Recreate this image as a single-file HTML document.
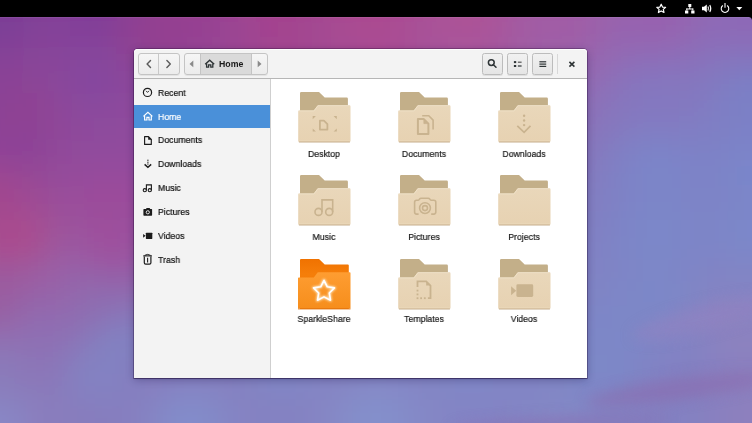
<!DOCTYPE html>
<html><head><meta charset="utf-8">
<style>
*{box-sizing:border-box;margin:0;padding:0}
html,body{width:752px;height:423px;overflow:hidden;background:#000;font-family:"Liberation Sans",sans-serif}
#bg{position:absolute;left:0;top:0;width:752px;height:423px}
#topbar{position:absolute;left:0;top:0;width:752px;height:17px;background:#000}
.tb{position:absolute;top:0}
#win{position:absolute;left:134px;top:49px;width:453px;height:329px;background:#fff;border-radius:4px 4px 0 0;box-shadow:0 0 0 1px rgba(30,0,40,.28),0 1px 1px rgba(20,10,60,.4),0 2px 8px rgba(20,10,60,.3)}
#hb{position:absolute;left:0;top:0;width:453px;height:30px;background:#f3f3f3;box-shadow:inset 0 1px 0 #fff;border-bottom:1px solid #b6b6b6;border-radius:4px 4px 0 0}
.btn{position:absolute;top:4px;height:22px;border:1px solid #c4c4c4;border-radius:3px;background:linear-gradient(#f6f6f6,#ececec);box-shadow:0 1px 0 rgba(0,0,0,.06)}
#side{position:absolute;left:0;top:30px;width:137px;height:299px;background:#f3f3f3;border-right:1px solid #cfcfcf}
.si{position:absolute;left:134px;width:136px;height:23px}
.si span{position:absolute;left:24px}
.st{position:absolute;left:158px;font-size:9.9px;line-height:10px;color:#111;white-space:nowrap;transform:scaleX(0.885);transform-origin:0 0;-webkit-text-stroke-width:0.22px}
.sel{background:#4a90d9;color:#fff}
.rb{background:linear-gradient(#f1f1f1,#e5e5e5);border-color:#bcbcbc;border-radius:2.5px;box-shadow:0 1px 0 rgba(0,0,0,.08)}
.st,.lbl,.ht{will-change:transform}
.lbl{position:absolute;font-size:9.9px;line-height:10px;color:#1a1a1a;text-align:center;width:80px;white-space:nowrap;transform:scaleX(0.885);-webkit-text-stroke-width:0.22px}
.fold{position:absolute;width:53px;height:52px}
</style></head><body>
<svg width="0" height="0" style="position:absolute"><defs><linearGradient id="fg" x1="0" y1="0" x2="0" y2="1"><stop offset="0" stop-color="#e9d7ba"/><stop offset="1" stop-color="#e7d2b2"/></linearGradient></defs></svg>
<svg id="bg" width="752" height="423" viewBox="0 0 752 423">
<defs><filter id="bb" x="0" y="0" width="752" height="423" filterUnits="userSpaceOnUse"><feGaussianBlur stdDeviation="14"/></filter></defs>
<g filter="url(#bb)"><rect x="-47.5" y="-47.5" width="24.5" height="24.5" fill="#7a3d96"/><rect x="-24.0" y="-47.5" width="24.5" height="24.5" fill="#7a3d96"/><rect x="-0.5" y="-47.5" width="24.5" height="24.5" fill="#7b3d96"/><rect x="23.0" y="-47.5" width="24.5" height="24.5" fill="#814197"/><rect x="46.5" y="-47.5" width="24.5" height="24.5" fill="#844198"/><rect x="70.0" y="-47.5" width="24.5" height="24.5" fill="#813e98"/><rect x="93.5" y="-47.5" width="24.5" height="24.5" fill="#813e98"/><rect x="117.0" y="-47.5" width="24.5" height="24.5" fill="#8d4194"/><rect x="140.5" y="-47.5" width="24.5" height="24.5" fill="#924191"/><rect x="164.0" y="-47.5" width="24.5" height="24.5" fill="#963f91"/><rect x="187.5" y="-47.5" width="24.5" height="24.5" fill="#963f91"/><rect x="211.0" y="-47.5" width="24.5" height="24.5" fill="#984393"/><rect x="234.5" y="-47.5" width="24.5" height="24.5" fill="#9f4491"/><rect x="258.0" y="-47.5" width="24.5" height="24.5" fill="#a4428e"/><rect x="281.5" y="-47.5" width="24.5" height="24.5" fill="#a4428e"/><rect x="305.0" y="-47.5" width="24.5" height="24.5" fill="#a34791"/><rect x="328.5" y="-47.5" width="24.5" height="24.5" fill="#a74b92"/><rect x="352.0" y="-47.5" width="24.5" height="24.5" fill="#ac4a90"/><rect x="375.5" y="-47.5" width="24.5" height="24.5" fill="#ac4a90"/><rect x="399.0" y="-47.5" width="24.5" height="24.5" fill="#a94e95"/><rect x="422.5" y="-47.5" width="24.5" height="24.5" fill="#a95298"/><rect x="446.0" y="-47.5" width="24.5" height="24.5" fill="#ad5296"/><rect x="469.5" y="-47.5" width="24.5" height="24.5" fill="#ad5296"/><rect x="493.0" y="-47.5" width="24.5" height="24.5" fill="#a7579c"/><rect x="516.5" y="-47.5" width="24.5" height="24.5" fill="#a15ca4"/><rect x="540.0" y="-47.5" width="24.5" height="24.5" fill="#a25ca5"/><rect x="563.5" y="-47.5" width="24.5" height="24.5" fill="#a25ca5"/><rect x="587.0" y="-47.5" width="24.5" height="24.5" fill="#9c60aa"/><rect x="610.5" y="-47.5" width="24.5" height="24.5" fill="#9763ae"/><rect x="634.0" y="-47.5" width="24.5" height="24.5" fill="#9860ae"/><rect x="657.5" y="-47.5" width="24.5" height="24.5" fill="#9861ae"/><rect x="681.0" y="-47.5" width="24.5" height="24.5" fill="#9366b2"/><rect x="704.5" y="-47.5" width="24.5" height="24.5" fill="#8e6ab6"/><rect x="728.0" y="-47.5" width="24.5" height="24.5" fill="#8e68b6"/><rect x="751.5" y="-47.5" width="24.5" height="24.5" fill="#8e68b6"/><rect x="775.0" y="-47.5" width="24.5" height="24.5" fill="#8e68b6"/><rect x="-47.5" y="-24.0" width="24.5" height="24.5" fill="#7a3d96"/><rect x="-24.0" y="-24.0" width="24.5" height="24.5" fill="#7a3d96"/><rect x="-0.5" y="-24.0" width="24.5" height="24.5" fill="#7b3d96"/><rect x="23.0" y="-24.0" width="24.5" height="24.5" fill="#814197"/><rect x="46.5" y="-24.0" width="24.5" height="24.5" fill="#844198"/><rect x="70.0" y="-24.0" width="24.5" height="24.5" fill="#813e98"/><rect x="93.5" y="-24.0" width="24.5" height="24.5" fill="#813e98"/><rect x="117.0" y="-24.0" width="24.5" height="24.5" fill="#8d4194"/><rect x="140.5" y="-24.0" width="24.5" height="24.5" fill="#924191"/><rect x="164.0" y="-24.0" width="24.5" height="24.5" fill="#963f91"/><rect x="187.5" y="-24.0" width="24.5" height="24.5" fill="#963f91"/><rect x="211.0" y="-24.0" width="24.5" height="24.5" fill="#984393"/><rect x="234.5" y="-24.0" width="24.5" height="24.5" fill="#9f4491"/><rect x="258.0" y="-24.0" width="24.5" height="24.5" fill="#a4428e"/><rect x="281.5" y="-24.0" width="24.5" height="24.5" fill="#a4428e"/><rect x="305.0" y="-24.0" width="24.5" height="24.5" fill="#a34791"/><rect x="328.5" y="-24.0" width="24.5" height="24.5" fill="#a74b92"/><rect x="352.0" y="-24.0" width="24.5" height="24.5" fill="#ac4a90"/><rect x="375.5" y="-24.0" width="24.5" height="24.5" fill="#ac4a90"/><rect x="399.0" y="-24.0" width="24.5" height="24.5" fill="#a94e95"/><rect x="422.5" y="-24.0" width="24.5" height="24.5" fill="#a95298"/><rect x="446.0" y="-24.0" width="24.5" height="24.5" fill="#ad5296"/><rect x="469.5" y="-24.0" width="24.5" height="24.5" fill="#ad5296"/><rect x="493.0" y="-24.0" width="24.5" height="24.5" fill="#a7579c"/><rect x="516.5" y="-24.0" width="24.5" height="24.5" fill="#a15ca4"/><rect x="540.0" y="-24.0" width="24.5" height="24.5" fill="#a25ca5"/><rect x="563.5" y="-24.0" width="24.5" height="24.5" fill="#a25ca5"/><rect x="587.0" y="-24.0" width="24.5" height="24.5" fill="#9c60aa"/><rect x="610.5" y="-24.0" width="24.5" height="24.5" fill="#9763ae"/><rect x="634.0" y="-24.0" width="24.5" height="24.5" fill="#9860ae"/><rect x="657.5" y="-24.0" width="24.5" height="24.5" fill="#9861ae"/><rect x="681.0" y="-24.0" width="24.5" height="24.5" fill="#9366b2"/><rect x="704.5" y="-24.0" width="24.5" height="24.5" fill="#8e6ab6"/><rect x="728.0" y="-24.0" width="24.5" height="24.5" fill="#8e68b6"/><rect x="751.5" y="-24.0" width="24.5" height="24.5" fill="#8e68b6"/><rect x="775.0" y="-24.0" width="24.5" height="24.5" fill="#8e68b6"/><rect x="-47.5" y="-0.5" width="24.5" height="24.5" fill="#7a3d96"/><rect x="-24.0" y="-0.5" width="24.5" height="24.5" fill="#7a3d96"/><rect x="-0.5" y="-0.5" width="24.5" height="24.5" fill="#7b3d96"/><rect x="23.0" y="-0.5" width="24.5" height="24.5" fill="#814197"/><rect x="46.5" y="-0.5" width="24.5" height="24.5" fill="#844198"/><rect x="70.0" y="-0.5" width="24.5" height="24.5" fill="#813e98"/><rect x="93.5" y="-0.5" width="24.5" height="24.5" fill="#813e98"/><rect x="117.0" y="-0.5" width="24.5" height="24.5" fill="#8d4194"/><rect x="140.5" y="-0.5" width="24.5" height="24.5" fill="#924191"/><rect x="164.0" y="-0.5" width="24.5" height="24.5" fill="#963f91"/><rect x="187.5" y="-0.5" width="24.5" height="24.5" fill="#963f91"/><rect x="211.0" y="-0.5" width="24.5" height="24.5" fill="#984393"/><rect x="234.5" y="-0.5" width="24.5" height="24.5" fill="#9f4491"/><rect x="258.0" y="-0.5" width="24.5" height="24.5" fill="#a4428e"/><rect x="281.5" y="-0.5" width="24.5" height="24.5" fill="#a4428e"/><rect x="305.0" y="-0.5" width="24.5" height="24.5" fill="#a34791"/><rect x="328.5" y="-0.5" width="24.5" height="24.5" fill="#a74b92"/><rect x="352.0" y="-0.5" width="24.5" height="24.5" fill="#ac4a90"/><rect x="375.5" y="-0.5" width="24.5" height="24.5" fill="#ac4a90"/><rect x="399.0" y="-0.5" width="24.5" height="24.5" fill="#a94e95"/><rect x="422.5" y="-0.5" width="24.5" height="24.5" fill="#a95298"/><rect x="446.0" y="-0.5" width="24.5" height="24.5" fill="#ad5296"/><rect x="469.5" y="-0.5" width="24.5" height="24.5" fill="#ad5296"/><rect x="493.0" y="-0.5" width="24.5" height="24.5" fill="#a7579c"/><rect x="516.5" y="-0.5" width="24.5" height="24.5" fill="#a15ca4"/><rect x="540.0" y="-0.5" width="24.5" height="24.5" fill="#a25ca5"/><rect x="563.5" y="-0.5" width="24.5" height="24.5" fill="#a25ca5"/><rect x="587.0" y="-0.5" width="24.5" height="24.5" fill="#9c60aa"/><rect x="610.5" y="-0.5" width="24.5" height="24.5" fill="#9763ae"/><rect x="634.0" y="-0.5" width="24.5" height="24.5" fill="#9860ae"/><rect x="657.5" y="-0.5" width="24.5" height="24.5" fill="#9861ae"/><rect x="681.0" y="-0.5" width="24.5" height="24.5" fill="#9366b2"/><rect x="704.5" y="-0.5" width="24.5" height="24.5" fill="#8e6ab6"/><rect x="728.0" y="-0.5" width="24.5" height="24.5" fill="#8e68b6"/><rect x="751.5" y="-0.5" width="24.5" height="24.5" fill="#8e68b6"/><rect x="775.0" y="-0.5" width="24.5" height="24.5" fill="#8e68b6"/><rect x="-47.5" y="23.0" width="24.5" height="24.5" fill="#7c3e96"/><rect x="-24.0" y="23.0" width="24.5" height="24.5" fill="#7c3e96"/><rect x="-0.5" y="23.0" width="24.5" height="24.5" fill="#7e3f97"/><rect x="23.0" y="23.0" width="24.5" height="24.5" fill="#844298"/><rect x="46.5" y="23.0" width="24.5" height="24.5" fill="#854399"/><rect x="70.0" y="23.0" width="24.5" height="24.5" fill="#834099"/><rect x="93.5" y="23.0" width="24.5" height="24.5" fill="#844098"/><rect x="117.0" y="23.0" width="24.5" height="24.5" fill="#8f4192"/><rect x="140.5" y="23.0" width="24.5" height="24.5" fill="#92408f"/><rect x="164.0" y="23.0" width="24.5" height="24.5" fill="#944091"/><rect x="187.5" y="23.0" width="24.5" height="24.5" fill="#964192"/><rect x="211.0" y="23.0" width="24.5" height="24.5" fill="#984493"/><rect x="234.5" y="23.0" width="24.5" height="24.5" fill="#9e4592"/><rect x="258.0" y="23.0" width="24.5" height="24.5" fill="#a3438f"/><rect x="281.5" y="23.0" width="24.5" height="24.5" fill="#a3448f"/><rect x="305.0" y="23.0" width="24.5" height="24.5" fill="#a34892"/><rect x="328.5" y="23.0" width="24.5" height="24.5" fill="#a74b93"/><rect x="352.0" y="23.0" width="24.5" height="24.5" fill="#aa4b91"/><rect x="375.5" y="23.0" width="24.5" height="24.5" fill="#aa4b92"/><rect x="399.0" y="23.0" width="24.5" height="24.5" fill="#a84f96"/><rect x="422.5" y="23.0" width="24.5" height="24.5" fill="#a85399"/><rect x="446.0" y="23.0" width="24.5" height="24.5" fill="#ab5398"/><rect x="469.5" y="23.0" width="24.5" height="24.5" fill="#ab5398"/><rect x="493.0" y="23.0" width="24.5" height="24.5" fill="#a6589e"/><rect x="516.5" y="23.0" width="24.5" height="24.5" fill="#a15ca4"/><rect x="540.0" y="23.0" width="24.5" height="24.5" fill="#a15da6"/><rect x="563.5" y="23.0" width="24.5" height="24.5" fill="#a05da6"/><rect x="587.0" y="23.0" width="24.5" height="24.5" fill="#9a62ab"/><rect x="610.5" y="23.0" width="24.5" height="24.5" fill="#9565b0"/><rect x="634.0" y="23.0" width="24.5" height="24.5" fill="#9663b0"/><rect x="657.5" y="23.0" width="24.5" height="24.5" fill="#9663b0"/><rect x="681.0" y="23.0" width="24.5" height="24.5" fill="#9069b4"/><rect x="704.5" y="23.0" width="24.5" height="24.5" fill="#8c6cb8"/><rect x="728.0" y="23.0" width="24.5" height="24.5" fill="#8d6ab7"/><rect x="751.5" y="23.0" width="24.5" height="24.5" fill="#8d69b7"/><rect x="775.0" y="23.0" width="24.5" height="24.5" fill="#8d69b7"/><rect x="-47.5" y="46.5" width="24.5" height="24.5" fill="#874297"/><rect x="-24.0" y="46.5" width="24.5" height="24.5" fill="#874297"/><rect x="-0.5" y="46.5" width="24.5" height="24.5" fill="#874297"/><rect x="23.0" y="46.5" width="24.5" height="24.5" fill="#894498"/><rect x="46.5" y="46.5" width="24.5" height="24.5" fill="#88459a"/><rect x="70.0" y="46.5" width="24.5" height="24.5" fill="#86469d"/><rect x="93.5" y="46.5" width="24.5" height="24.5" fill="#87469c"/><rect x="117.0" y="46.5" width="24.5" height="24.5" fill="#8d4496"/><rect x="140.5" y="46.5" width="24.5" height="24.5" fill="#914292"/><rect x="164.0" y="46.5" width="24.5" height="24.5" fill="#934393"/><rect x="187.5" y="46.5" width="24.5" height="24.5" fill="#954494"/><rect x="211.0" y="46.5" width="24.5" height="24.5" fill="#994694"/><rect x="234.5" y="46.5" width="24.5" height="24.5" fill="#9e4793"/><rect x="258.0" y="46.5" width="24.5" height="24.5" fill="#a24792"/><rect x="281.5" y="46.5" width="24.5" height="24.5" fill="#a34792"/><rect x="305.0" y="46.5" width="24.5" height="24.5" fill="#a34a93"/><rect x="328.5" y="46.5" width="24.5" height="24.5" fill="#a54c94"/><rect x="352.0" y="46.5" width="24.5" height="24.5" fill="#a84d94"/><rect x="375.5" y="46.5" width="24.5" height="24.5" fill="#a84e94"/><rect x="399.0" y="46.5" width="24.5" height="24.5" fill="#a75198"/><rect x="422.5" y="46.5" width="24.5" height="24.5" fill="#a6549b"/><rect x="446.0" y="46.5" width="24.5" height="24.5" fill="#a7569d"/><rect x="469.5" y="46.5" width="24.5" height="24.5" fill="#a6579e"/><rect x="493.0" y="46.5" width="24.5" height="24.5" fill="#a35aa1"/><rect x="516.5" y="46.5" width="24.5" height="24.5" fill="#9f5ea5"/><rect x="540.0" y="46.5" width="24.5" height="24.5" fill="#9d60a8"/><rect x="563.5" y="46.5" width="24.5" height="24.5" fill="#9a62ab"/><rect x="587.0" y="46.5" width="24.5" height="24.5" fill="#9567b0"/><rect x="610.5" y="46.5" width="24.5" height="24.5" fill="#906cb5"/><rect x="634.0" y="46.5" width="24.5" height="24.5" fill="#8d6db7"/><rect x="657.5" y="46.5" width="24.5" height="24.5" fill="#8c6eb8"/><rect x="681.0" y="46.5" width="24.5" height="24.5" fill="#8a70ba"/><rect x="704.5" y="46.5" width="24.5" height="24.5" fill="#8773bc"/><rect x="728.0" y="46.5" width="24.5" height="24.5" fill="#8574bd"/><rect x="751.5" y="46.5" width="24.5" height="24.5" fill="#8574be"/><rect x="775.0" y="46.5" width="24.5" height="24.5" fill="#8574be"/><rect x="-47.5" y="70.0" width="24.5" height="24.5" fill="#8b4296"/><rect x="-24.0" y="70.0" width="24.5" height="24.5" fill="#8b4296"/><rect x="-0.5" y="70.0" width="24.5" height="24.5" fill="#8b4296"/><rect x="23.0" y="70.0" width="24.5" height="24.5" fill="#8c4497"/><rect x="46.5" y="70.0" width="24.5" height="24.5" fill="#8a469b"/><rect x="70.0" y="70.0" width="24.5" height="24.5" fill="#85479f"/><rect x="93.5" y="70.0" width="24.5" height="24.5" fill="#85479f"/><rect x="117.0" y="70.0" width="24.5" height="24.5" fill="#8b479b"/><rect x="140.5" y="70.0" width="24.5" height="24.5" fill="#8f4798"/><rect x="164.0" y="70.0" width="24.5" height="24.5" fill="#924797"/><rect x="187.5" y="70.0" width="24.5" height="24.5" fill="#954897"/><rect x="211.0" y="70.0" width="24.5" height="24.5" fill="#9a4996"/><rect x="234.5" y="70.0" width="24.5" height="24.5" fill="#a14893"/><rect x="258.0" y="70.0" width="24.5" height="24.5" fill="#a64590"/><rect x="281.5" y="70.0" width="24.5" height="24.5" fill="#a64690"/><rect x="305.0" y="70.0" width="24.5" height="24.5" fill="#a44993"/><rect x="328.5" y="70.0" width="24.5" height="24.5" fill="#a64c94"/><rect x="352.0" y="70.0" width="24.5" height="24.5" fill="#aa4b92"/><rect x="375.5" y="70.0" width="24.5" height="24.5" fill="#aa4c92"/><rect x="399.0" y="70.0" width="24.5" height="24.5" fill="#a75097"/><rect x="422.5" y="70.0" width="24.5" height="24.5" fill="#a5559d"/><rect x="446.0" y="70.0" width="24.5" height="24.5" fill="#a756a0"/><rect x="469.5" y="70.0" width="24.5" height="24.5" fill="#a757a0"/><rect x="493.0" y="70.0" width="24.5" height="24.5" fill="#a35aa3"/><rect x="516.5" y="70.0" width="24.5" height="24.5" fill="#9d5fa7"/><rect x="540.0" y="70.0" width="24.5" height="24.5" fill="#9964ac"/><rect x="563.5" y="70.0" width="24.5" height="24.5" fill="#9468b0"/><rect x="587.0" y="70.0" width="24.5" height="24.5" fill="#8f6db5"/><rect x="610.5" y="70.0" width="24.5" height="24.5" fill="#8973bb"/><rect x="634.0" y="70.0" width="24.5" height="24.5" fill="#8576bf"/><rect x="657.5" y="70.0" width="24.5" height="24.5" fill="#8577bf"/><rect x="681.0" y="70.0" width="24.5" height="24.5" fill="#8576be"/><rect x="704.5" y="70.0" width="24.5" height="24.5" fill="#817ac1"/><rect x="728.0" y="70.0" width="24.5" height="24.5" fill="#7c7ec4"/><rect x="751.5" y="70.0" width="24.5" height="24.5" fill="#7b7fc5"/><rect x="775.0" y="70.0" width="24.5" height="24.5" fill="#7b7fc5"/><rect x="-47.5" y="93.5" width="24.5" height="24.5" fill="#8a4196"/><rect x="-24.0" y="93.5" width="24.5" height="24.5" fill="#8a4196"/><rect x="-0.5" y="93.5" width="24.5" height="24.5" fill="#8d4294"/><rect x="23.0" y="93.5" width="24.5" height="24.5" fill="#904393"/><rect x="46.5" y="93.5" width="24.5" height="24.5" fill="#8d4699"/><rect x="70.0" y="93.5" width="24.5" height="24.5" fill="#8a489d"/><rect x="93.5" y="93.5" width="24.5" height="24.5" fill="#8a499e"/><rect x="117.0" y="93.5" width="24.5" height="24.5" fill="#8d4a9c"/><rect x="140.5" y="93.5" width="24.5" height="24.5" fill="#904a9b"/><rect x="164.0" y="93.5" width="24.5" height="24.5" fill="#924b9a"/><rect x="187.5" y="93.5" width="24.5" height="24.5" fill="#954b99"/><rect x="211.0" y="93.5" width="24.5" height="24.5" fill="#9a4b97"/><rect x="234.5" y="93.5" width="24.5" height="24.5" fill="#a14893"/><rect x="258.0" y="93.5" width="24.5" height="24.5" fill="#a7458f"/><rect x="281.5" y="93.5" width="24.5" height="24.5" fill="#a7458f"/><rect x="305.0" y="93.5" width="24.5" height="24.5" fill="#a54a93"/><rect x="328.5" y="93.5" width="24.5" height="24.5" fill="#a74d94"/><rect x="352.0" y="93.5" width="24.5" height="24.5" fill="#ab4a91"/><rect x="375.5" y="93.5" width="24.5" height="24.5" fill="#ab4b91"/><rect x="399.0" y="93.5" width="24.5" height="24.5" fill="#a75097"/><rect x="422.5" y="93.5" width="24.5" height="24.5" fill="#a5569f"/><rect x="446.0" y="93.5" width="24.5" height="24.5" fill="#a756a0"/><rect x="469.5" y="93.5" width="24.5" height="24.5" fill="#a756a0"/><rect x="493.0" y="93.5" width="24.5" height="24.5" fill="#a25ba3"/><rect x="516.5" y="93.5" width="24.5" height="24.5" fill="#9b61a9"/><rect x="540.0" y="93.5" width="24.5" height="24.5" fill="#9568af"/><rect x="563.5" y="93.5" width="24.5" height="24.5" fill="#906db4"/><rect x="587.0" y="93.5" width="24.5" height="24.5" fill="#8b72b9"/><rect x="610.5" y="93.5" width="24.5" height="24.5" fill="#8676be"/><rect x="634.0" y="93.5" width="24.5" height="24.5" fill="#8478c0"/><rect x="657.5" y="93.5" width="24.5" height="24.5" fill="#8478c0"/><rect x="681.0" y="93.5" width="24.5" height="24.5" fill="#8379c0"/><rect x="704.5" y="93.5" width="24.5" height="24.5" fill="#7f7dc3"/><rect x="728.0" y="93.5" width="24.5" height="24.5" fill="#7b80c6"/><rect x="751.5" y="93.5" width="24.5" height="24.5" fill="#7a80c6"/><rect x="775.0" y="93.5" width="24.5" height="24.5" fill="#7a80c6"/><rect x="-47.5" y="117.0" width="24.5" height="24.5" fill="#8e4295"/><rect x="-24.0" y="117.0" width="24.5" height="24.5" fill="#8e4295"/><rect x="-0.5" y="117.0" width="24.5" height="24.5" fill="#8f4294"/><rect x="23.0" y="117.0" width="24.5" height="24.5" fill="#8e4295"/><rect x="46.5" y="117.0" width="24.5" height="24.5" fill="#8f4698"/><rect x="70.0" y="117.0" width="24.5" height="24.5" fill="#8e4a9c"/><rect x="93.5" y="117.0" width="24.5" height="24.5" fill="#8e4c9e"/><rect x="117.0" y="117.0" width="24.5" height="24.5" fill="#8f4c9d"/><rect x="140.5" y="117.0" width="24.5" height="24.5" fill="#904c9d"/><rect x="164.0" y="117.0" width="24.5" height="24.5" fill="#934d9c"/><rect x="187.5" y="117.0" width="24.5" height="24.5" fill="#954e9c"/><rect x="211.0" y="117.0" width="24.5" height="24.5" fill="#994e9a"/><rect x="234.5" y="117.0" width="24.5" height="24.5" fill="#9e4c97"/><rect x="258.0" y="117.0" width="24.5" height="24.5" fill="#a34993"/><rect x="281.5" y="117.0" width="24.5" height="24.5" fill="#a44993"/><rect x="305.0" y="117.0" width="24.5" height="24.5" fill="#a24d96"/><rect x="328.5" y="117.0" width="24.5" height="24.5" fill="#a44f97"/><rect x="352.0" y="117.0" width="24.5" height="24.5" fill="#a74e95"/><rect x="375.5" y="117.0" width="24.5" height="24.5" fill="#a74f95"/><rect x="399.0" y="117.0" width="24.5" height="24.5" fill="#a3549b"/><rect x="422.5" y="117.0" width="24.5" height="24.5" fill="#a258a1"/><rect x="446.0" y="117.0" width="24.5" height="24.5" fill="#a459a2"/><rect x="469.5" y="117.0" width="24.5" height="24.5" fill="#a35aa3"/><rect x="493.0" y="117.0" width="24.5" height="24.5" fill="#9e5fa7"/><rect x="516.5" y="117.0" width="24.5" height="24.5" fill="#9765ad"/><rect x="540.0" y="117.0" width="24.5" height="24.5" fill="#916bb2"/><rect x="563.5" y="117.0" width="24.5" height="24.5" fill="#8c71b7"/><rect x="587.0" y="117.0" width="24.5" height="24.5" fill="#8776bc"/><rect x="610.5" y="117.0" width="24.5" height="24.5" fill="#847ac0"/><rect x="634.0" y="117.0" width="24.5" height="24.5" fill="#827bc2"/><rect x="657.5" y="117.0" width="24.5" height="24.5" fill="#827cc2"/><rect x="681.0" y="117.0" width="24.5" height="24.5" fill="#817dc3"/><rect x="704.5" y="117.0" width="24.5" height="24.5" fill="#7f7fc4"/><rect x="728.0" y="117.0" width="24.5" height="24.5" fill="#7c80c6"/><rect x="751.5" y="117.0" width="24.5" height="24.5" fill="#7c80c6"/><rect x="775.0" y="117.0" width="24.5" height="24.5" fill="#7c80c6"/><rect x="-47.5" y="140.5" width="24.5" height="24.5" fill="#8f4397"/><rect x="-24.0" y="140.5" width="24.5" height="24.5" fill="#8f4397"/><rect x="-0.5" y="140.5" width="24.5" height="24.5" fill="#8b4298"/><rect x="23.0" y="140.5" width="24.5" height="24.5" fill="#8d4398"/><rect x="46.5" y="140.5" width="24.5" height="24.5" fill="#904899"/><rect x="70.0" y="140.5" width="24.5" height="24.5" fill="#914b9c"/><rect x="93.5" y="140.5" width="24.5" height="24.5" fill="#8f4c9e"/><rect x="117.0" y="140.5" width="24.5" height="24.5" fill="#904c9e"/><rect x="140.5" y="140.5" width="24.5" height="24.5" fill="#924e9d"/><rect x="164.0" y="140.5" width="24.5" height="24.5" fill="#93509e"/><rect x="187.5" y="140.5" width="24.5" height="24.5" fill="#95529e"/><rect x="211.0" y="140.5" width="24.5" height="24.5" fill="#97539e"/><rect x="234.5" y="140.5" width="24.5" height="24.5" fill="#9a539c"/><rect x="258.0" y="140.5" width="24.5" height="24.5" fill="#9c529b"/><rect x="281.5" y="140.5" width="24.5" height="24.5" fill="#9d529b"/><rect x="305.0" y="140.5" width="24.5" height="24.5" fill="#9d549c"/><rect x="328.5" y="140.5" width="24.5" height="24.5" fill="#9e559c"/><rect x="352.0" y="140.5" width="24.5" height="24.5" fill="#a0559c"/><rect x="375.5" y="140.5" width="24.5" height="24.5" fill="#a0579d"/><rect x="399.0" y="140.5" width="24.5" height="24.5" fill="#9d5aa1"/><rect x="422.5" y="140.5" width="24.5" height="24.5" fill="#9c5ea5"/><rect x="446.0" y="140.5" width="24.5" height="24.5" fill="#9b60a8"/><rect x="469.5" y="140.5" width="24.5" height="24.5" fill="#9a62aa"/><rect x="493.0" y="140.5" width="24.5" height="24.5" fill="#9666ad"/><rect x="516.5" y="140.5" width="24.5" height="24.5" fill="#926ab1"/><rect x="540.0" y="140.5" width="24.5" height="24.5" fill="#8d70b6"/><rect x="563.5" y="140.5" width="24.5" height="24.5" fill="#8975ba"/><rect x="587.0" y="140.5" width="24.5" height="24.5" fill="#847abf"/><rect x="610.5" y="140.5" width="24.5" height="24.5" fill="#807fc4"/><rect x="634.0" y="140.5" width="24.5" height="24.5" fill="#7c84c8"/><rect x="657.5" y="140.5" width="24.5" height="24.5" fill="#7c84c8"/><rect x="681.0" y="140.5" width="24.5" height="24.5" fill="#7e81c6"/><rect x="704.5" y="140.5" width="24.5" height="24.5" fill="#7d82c6"/><rect x="728.0" y="140.5" width="24.5" height="24.5" fill="#7b84c9"/><rect x="751.5" y="140.5" width="24.5" height="24.5" fill="#7b85c9"/><rect x="775.0" y="140.5" width="24.5" height="24.5" fill="#7b85c9"/><rect x="-47.5" y="164.0" width="24.5" height="24.5" fill="#9d4791"/><rect x="-24.0" y="164.0" width="24.5" height="24.5" fill="#9d4791"/><rect x="-0.5" y="164.0" width="24.5" height="24.5" fill="#9b4792"/><rect x="23.0" y="164.0" width="24.5" height="24.5" fill="#954897"/><rect x="46.5" y="164.0" width="24.5" height="24.5" fill="#954b9a"/><rect x="70.0" y="164.0" width="24.5" height="24.5" fill="#964c9c"/><rect x="93.5" y="164.0" width="24.5" height="24.5" fill="#974b9c"/><rect x="117.0" y="164.0" width="24.5" height="24.5" fill="#974c9c"/><rect x="140.5" y="164.0" width="24.5" height="24.5" fill="#954f9e"/><rect x="164.0" y="164.0" width="24.5" height="24.5" fill="#94529f"/><rect x="187.5" y="164.0" width="24.5" height="24.5" fill="#9455a0"/><rect x="211.0" y="164.0" width="24.5" height="24.5" fill="#9558a1"/><rect x="234.5" y="164.0" width="24.5" height="24.5" fill="#955aa2"/><rect x="258.0" y="164.0" width="24.5" height="24.5" fill="#965ba3"/><rect x="281.5" y="164.0" width="24.5" height="24.5" fill="#965ca3"/><rect x="305.0" y="164.0" width="24.5" height="24.5" fill="#975ca2"/><rect x="328.5" y="164.0" width="24.5" height="24.5" fill="#995ca2"/><rect x="352.0" y="164.0" width="24.5" height="24.5" fill="#995ca3"/><rect x="375.5" y="164.0" width="24.5" height="24.5" fill="#995ea5"/><rect x="399.0" y="164.0" width="24.5" height="24.5" fill="#9662a9"/><rect x="422.5" y="164.0" width="24.5" height="24.5" fill="#9366ad"/><rect x="446.0" y="164.0" width="24.5" height="24.5" fill="#9169b1"/><rect x="469.5" y="164.0" width="24.5" height="24.5" fill="#8f6bb2"/><rect x="493.0" y="164.0" width="24.5" height="24.5" fill="#8e6db4"/><rect x="516.5" y="164.0" width="24.5" height="24.5" fill="#8d70b6"/><rect x="540.0" y="164.0" width="24.5" height="24.5" fill="#8a74b9"/><rect x="563.5" y="164.0" width="24.5" height="24.5" fill="#8678bd"/><rect x="587.0" y="164.0" width="24.5" height="24.5" fill="#827dc1"/><rect x="610.5" y="164.0" width="24.5" height="24.5" fill="#7e82c6"/><rect x="634.0" y="164.0" width="24.5" height="24.5" fill="#7b85c9"/><rect x="657.5" y="164.0" width="24.5" height="24.5" fill="#7b85c9"/><rect x="681.0" y="164.0" width="24.5" height="24.5" fill="#7d83c7"/><rect x="704.5" y="164.0" width="24.5" height="24.5" fill="#7d83c7"/><rect x="728.0" y="164.0" width="24.5" height="24.5" fill="#7a86ca"/><rect x="751.5" y="164.0" width="24.5" height="24.5" fill="#7a86ca"/><rect x="775.0" y="164.0" width="24.5" height="24.5" fill="#7a86ca"/><rect x="-47.5" y="187.5" width="24.5" height="24.5" fill="#a2468e"/><rect x="-24.0" y="187.5" width="24.5" height="24.5" fill="#a2468e"/><rect x="-0.5" y="187.5" width="24.5" height="24.5" fill="#a1478f"/><rect x="23.0" y="187.5" width="24.5" height="24.5" fill="#9d4b95"/><rect x="46.5" y="187.5" width="24.5" height="24.5" fill="#994e9a"/><rect x="70.0" y="187.5" width="24.5" height="24.5" fill="#9a4d9c"/><rect x="93.5" y="187.5" width="24.5" height="24.5" fill="#9c489a"/><rect x="117.0" y="187.5" width="24.5" height="24.5" fill="#9b4b9b"/><rect x="140.5" y="187.5" width="24.5" height="24.5" fill="#97509e"/><rect x="164.0" y="187.5" width="24.5" height="24.5" fill="#9555a1"/><rect x="187.5" y="187.5" width="24.5" height="24.5" fill="#9459a3"/><rect x="211.0" y="187.5" width="24.5" height="24.5" fill="#935ca5"/><rect x="234.5" y="187.5" width="24.5" height="24.5" fill="#9261a7"/><rect x="258.0" y="187.5" width="24.5" height="24.5" fill="#9165a9"/><rect x="281.5" y="187.5" width="24.5" height="24.5" fill="#9165a9"/><rect x="305.0" y="187.5" width="24.5" height="24.5" fill="#9263a8"/><rect x="328.5" y="187.5" width="24.5" height="24.5" fill="#9462a8"/><rect x="352.0" y="187.5" width="24.5" height="24.5" fill="#9462a9"/><rect x="375.5" y="187.5" width="24.5" height="24.5" fill="#9365ab"/><rect x="399.0" y="187.5" width="24.5" height="24.5" fill="#9069b0"/><rect x="422.5" y="187.5" width="24.5" height="24.5" fill="#8b6eb5"/><rect x="446.0" y="187.5" width="24.5" height="24.5" fill="#8673ba"/><rect x="469.5" y="187.5" width="24.5" height="24.5" fill="#8674bb"/><rect x="493.0" y="187.5" width="24.5" height="24.5" fill="#8873ba"/><rect x="516.5" y="187.5" width="24.5" height="24.5" fill="#8974ba"/><rect x="540.0" y="187.5" width="24.5" height="24.5" fill="#8777bc"/><rect x="563.5" y="187.5" width="24.5" height="24.5" fill="#847bbf"/><rect x="587.0" y="187.5" width="24.5" height="24.5" fill="#817fc2"/><rect x="610.5" y="187.5" width="24.5" height="24.5" fill="#7e82c6"/><rect x="634.0" y="187.5" width="24.5" height="24.5" fill="#7c85c8"/><rect x="657.5" y="187.5" width="24.5" height="24.5" fill="#7c85c8"/><rect x="681.0" y="187.5" width="24.5" height="24.5" fill="#7d84c7"/><rect x="704.5" y="187.5" width="24.5" height="24.5" fill="#7d84c7"/><rect x="728.0" y="187.5" width="24.5" height="24.5" fill="#7c85c8"/><rect x="751.5" y="187.5" width="24.5" height="24.5" fill="#7b85c9"/><rect x="775.0" y="187.5" width="24.5" height="24.5" fill="#7b85c9"/><rect x="-47.5" y="211.0" width="24.5" height="24.5" fill="#a44b90"/><rect x="-24.0" y="211.0" width="24.5" height="24.5" fill="#a44b90"/><rect x="-0.5" y="211.0" width="24.5" height="24.5" fill="#a84b8e"/><rect x="23.0" y="211.0" width="24.5" height="24.5" fill="#a64d91"/><rect x="46.5" y="211.0" width="24.5" height="24.5" fill="#9d529a"/><rect x="70.0" y="211.0" width="24.5" height="24.5" fill="#9b519d"/><rect x="93.5" y="211.0" width="24.5" height="24.5" fill="#9c4e9c"/><rect x="117.0" y="211.0" width="24.5" height="24.5" fill="#9b4f9d"/><rect x="140.5" y="211.0" width="24.5" height="24.5" fill="#9853a0"/><rect x="164.0" y="211.0" width="24.5" height="24.5" fill="#9558a3"/><rect x="187.5" y="211.0" width="24.5" height="24.5" fill="#935ca5"/><rect x="211.0" y="211.0" width="24.5" height="24.5" fill="#9161a8"/><rect x="234.5" y="211.0" width="24.5" height="24.5" fill="#9066aa"/><rect x="258.0" y="211.0" width="24.5" height="24.5" fill="#8e69ac"/><rect x="281.5" y="211.0" width="24.5" height="24.5" fill="#8e69ac"/><rect x="305.0" y="211.0" width="24.5" height="24.5" fill="#9068ab"/><rect x="328.5" y="211.0" width="24.5" height="24.5" fill="#9166ab"/><rect x="352.0" y="211.0" width="24.5" height="24.5" fill="#9167ad"/><rect x="375.5" y="211.0" width="24.5" height="24.5" fill="#8f6ab0"/><rect x="399.0" y="211.0" width="24.5" height="24.5" fill="#8b6eb5"/><rect x="422.5" y="211.0" width="24.5" height="24.5" fill="#8574bb"/><rect x="446.0" y="211.0" width="24.5" height="24.5" fill="#8177bf"/><rect x="469.5" y="211.0" width="24.5" height="24.5" fill="#8178bf"/><rect x="493.0" y="211.0" width="24.5" height="24.5" fill="#8476bd"/><rect x="516.5" y="211.0" width="24.5" height="24.5" fill="#8677bc"/><rect x="540.0" y="211.0" width="24.5" height="24.5" fill="#8579be"/><rect x="563.5" y="211.0" width="24.5" height="24.5" fill="#837dc0"/><rect x="587.0" y="211.0" width="24.5" height="24.5" fill="#8080c3"/><rect x="610.5" y="211.0" width="24.5" height="24.5" fill="#7d84c7"/><rect x="634.0" y="211.0" width="24.5" height="24.5" fill="#7b87c9"/><rect x="657.5" y="211.0" width="24.5" height="24.5" fill="#7b87c9"/><rect x="681.0" y="211.0" width="24.5" height="24.5" fill="#7d85c7"/><rect x="704.5" y="211.0" width="24.5" height="24.5" fill="#7d85c7"/><rect x="728.0" y="211.0" width="24.5" height="24.5" fill="#7b87c9"/><rect x="751.5" y="211.0" width="24.5" height="24.5" fill="#7a88ca"/><rect x="775.0" y="211.0" width="24.5" height="24.5" fill="#7a88ca"/><rect x="-47.5" y="234.5" width="24.5" height="24.5" fill="#a74e90"/><rect x="-24.0" y="234.5" width="24.5" height="24.5" fill="#a74e90"/><rect x="-0.5" y="234.5" width="24.5" height="24.5" fill="#ac4b8c"/><rect x="23.0" y="234.5" width="24.5" height="24.5" fill="#a84e90"/><rect x="46.5" y="234.5" width="24.5" height="24.5" fill="#9c589f"/><rect x="70.0" y="234.5" width="24.5" height="24.5" fill="#9b56a0"/><rect x="93.5" y="234.5" width="24.5" height="24.5" fill="#a04e9c"/><rect x="117.0" y="234.5" width="24.5" height="24.5" fill="#9d519e"/><rect x="140.5" y="234.5" width="24.5" height="24.5" fill="#9858a3"/><rect x="164.0" y="234.5" width="24.5" height="24.5" fill="#945ca6"/><rect x="187.5" y="234.5" width="24.5" height="24.5" fill="#9260a8"/><rect x="211.0" y="234.5" width="24.5" height="24.5" fill="#9064aa"/><rect x="234.5" y="234.5" width="24.5" height="24.5" fill="#8f68ac"/><rect x="258.0" y="234.5" width="24.5" height="24.5" fill="#8e6aac"/><rect x="281.5" y="234.5" width="24.5" height="24.5" fill="#8e6aac"/><rect x="305.0" y="234.5" width="24.5" height="24.5" fill="#8f69ad"/><rect x="328.5" y="234.5" width="24.5" height="24.5" fill="#8f6aae"/><rect x="352.0" y="234.5" width="24.5" height="24.5" fill="#8e6bb0"/><rect x="375.5" y="234.5" width="24.5" height="24.5" fill="#8c6eb3"/><rect x="399.0" y="234.5" width="24.5" height="24.5" fill="#8971b7"/><rect x="422.5" y="234.5" width="24.5" height="24.5" fill="#8475bc"/><rect x="446.0" y="234.5" width="24.5" height="24.5" fill="#8178bf"/><rect x="469.5" y="234.5" width="24.5" height="24.5" fill="#8178c0"/><rect x="493.0" y="234.5" width="24.5" height="24.5" fill="#8378be"/><rect x="516.5" y="234.5" width="24.5" height="24.5" fill="#8479be"/><rect x="540.0" y="234.5" width="24.5" height="24.5" fill="#847cbf"/><rect x="563.5" y="234.5" width="24.5" height="24.5" fill="#827fc2"/><rect x="587.0" y="234.5" width="24.5" height="24.5" fill="#8082c4"/><rect x="610.5" y="234.5" width="24.5" height="24.5" fill="#7d85c7"/><rect x="634.0" y="234.5" width="24.5" height="24.5" fill="#7b87c9"/><rect x="657.5" y="234.5" width="24.5" height="24.5" fill="#7b87c9"/><rect x="681.0" y="234.5" width="24.5" height="24.5" fill="#7d85c7"/><rect x="704.5" y="234.5" width="24.5" height="24.5" fill="#7e85c7"/><rect x="728.0" y="234.5" width="24.5" height="24.5" fill="#7b87c9"/><rect x="751.5" y="234.5" width="24.5" height="24.5" fill="#7b88ca"/><rect x="775.0" y="234.5" width="24.5" height="24.5" fill="#7b88ca"/><rect x="-47.5" y="258.0" width="24.5" height="24.5" fill="#9d599c"/><rect x="-24.0" y="258.0" width="24.5" height="24.5" fill="#9d599c"/><rect x="-0.5" y="258.0" width="24.5" height="24.5" fill="#9f589b"/><rect x="23.0" y="258.0" width="24.5" height="24.5" fill="#9c5ca0"/><rect x="46.5" y="258.0" width="24.5" height="24.5" fill="#9861a7"/><rect x="70.0" y="258.0" width="24.5" height="24.5" fill="#9661a8"/><rect x="93.5" y="258.0" width="24.5" height="24.5" fill="#985ca5"/><rect x="117.0" y="258.0" width="24.5" height="24.5" fill="#975ba5"/><rect x="140.5" y="258.0" width="24.5" height="24.5" fill="#945fa8"/><rect x="164.0" y="258.0" width="24.5" height="24.5" fill="#9262aa"/><rect x="187.5" y="258.0" width="24.5" height="24.5" fill="#9065ac"/><rect x="211.0" y="258.0" width="24.5" height="24.5" fill="#8f67ad"/><rect x="234.5" y="258.0" width="24.5" height="24.5" fill="#8e6aae"/><rect x="258.0" y="258.0" width="24.5" height="24.5" fill="#8e6bae"/><rect x="281.5" y="258.0" width="24.5" height="24.5" fill="#8e6bae"/><rect x="305.0" y="258.0" width="24.5" height="24.5" fill="#8d6caf"/><rect x="328.5" y="258.0" width="24.5" height="24.5" fill="#8d6db1"/><rect x="352.0" y="258.0" width="24.5" height="24.5" fill="#8c6fb3"/><rect x="375.5" y="258.0" width="24.5" height="24.5" fill="#8b71b6"/><rect x="399.0" y="258.0" width="24.5" height="24.5" fill="#8874b9"/><rect x="422.5" y="258.0" width="24.5" height="24.5" fill="#8576bc"/><rect x="446.0" y="258.0" width="24.5" height="24.5" fill="#8378be"/><rect x="469.5" y="258.0" width="24.5" height="24.5" fill="#8378bf"/><rect x="493.0" y="258.0" width="24.5" height="24.5" fill="#8379bf"/><rect x="516.5" y="258.0" width="24.5" height="24.5" fill="#847bbf"/><rect x="540.0" y="258.0" width="24.5" height="24.5" fill="#837ec1"/><rect x="563.5" y="258.0" width="24.5" height="24.5" fill="#8181c3"/><rect x="587.0" y="258.0" width="24.5" height="24.5" fill="#8083c5"/><rect x="610.5" y="258.0" width="24.5" height="24.5" fill="#7e85c6"/><rect x="634.0" y="258.0" width="24.5" height="24.5" fill="#7d86c7"/><rect x="657.5" y="258.0" width="24.5" height="24.5" fill="#7d86c7"/><rect x="681.0" y="258.0" width="24.5" height="24.5" fill="#7f85c6"/><rect x="704.5" y="258.0" width="24.5" height="24.5" fill="#8184c5"/><rect x="728.0" y="258.0" width="24.5" height="24.5" fill="#8185c5"/><rect x="751.5" y="258.0" width="24.5" height="24.5" fill="#8185c5"/><rect x="775.0" y="258.0" width="24.5" height="24.5" fill="#8185c5"/><rect x="-47.5" y="281.5" width="24.5" height="24.5" fill="#9a5ca0"/><rect x="-24.0" y="281.5" width="24.5" height="24.5" fill="#9a5ca0"/><rect x="-0.5" y="281.5" width="24.5" height="24.5" fill="#995da1"/><rect x="23.0" y="281.5" width="24.5" height="24.5" fill="#9762a7"/><rect x="46.5" y="281.5" width="24.5" height="24.5" fill="#9763a9"/><rect x="70.0" y="281.5" width="24.5" height="24.5" fill="#906aae"/><rect x="93.5" y="281.5" width="24.5" height="24.5" fill="#8f6baf"/><rect x="117.0" y="281.5" width="24.5" height="24.5" fill="#8f6aaf"/><rect x="140.5" y="281.5" width="24.5" height="24.5" fill="#8f69af"/><rect x="164.0" y="281.5" width="24.5" height="24.5" fill="#8f69af"/><rect x="187.5" y="281.5" width="24.5" height="24.5" fill="#8e6ab0"/><rect x="211.0" y="281.5" width="24.5" height="24.5" fill="#8d6cb1"/><rect x="234.5" y="281.5" width="24.5" height="24.5" fill="#8c6fb2"/><rect x="258.0" y="281.5" width="24.5" height="24.5" fill="#8b71b3"/><rect x="281.5" y="281.5" width="24.5" height="24.5" fill="#8b72b4"/><rect x="305.0" y="281.5" width="24.5" height="24.5" fill="#8b72b5"/><rect x="328.5" y="281.5" width="24.5" height="24.5" fill="#8b72b5"/><rect x="352.0" y="281.5" width="24.5" height="24.5" fill="#8a73b7"/><rect x="375.5" y="281.5" width="24.5" height="24.5" fill="#8975b9"/><rect x="399.0" y="281.5" width="24.5" height="24.5" fill="#8777bb"/><rect x="422.5" y="281.5" width="24.5" height="24.5" fill="#8579bd"/><rect x="446.0" y="281.5" width="24.5" height="24.5" fill="#847bbf"/><rect x="469.5" y="281.5" width="24.5" height="24.5" fill="#847cc0"/><rect x="493.0" y="281.5" width="24.5" height="24.5" fill="#837dc0"/><rect x="516.5" y="281.5" width="24.5" height="24.5" fill="#837ec1"/><rect x="540.0" y="281.5" width="24.5" height="24.5" fill="#8280c2"/><rect x="563.5" y="281.5" width="24.5" height="24.5" fill="#8083c4"/><rect x="587.0" y="281.5" width="24.5" height="24.5" fill="#7f85c5"/><rect x="610.5" y="281.5" width="24.5" height="24.5" fill="#7e86c7"/><rect x="634.0" y="281.5" width="24.5" height="24.5" fill="#7c88c8"/><rect x="657.5" y="281.5" width="24.5" height="24.5" fill="#7c88c8"/><rect x="681.0" y="281.5" width="24.5" height="24.5" fill="#8085c5"/><rect x="704.5" y="281.5" width="24.5" height="24.5" fill="#8484c3"/><rect x="728.0" y="281.5" width="24.5" height="24.5" fill="#8484c4"/><rect x="751.5" y="281.5" width="24.5" height="24.5" fill="#8484c4"/><rect x="775.0" y="281.5" width="24.5" height="24.5" fill="#8484c4"/><rect x="-47.5" y="305.0" width="24.5" height="24.5" fill="#9860a3"/><rect x="-24.0" y="305.0" width="24.5" height="24.5" fill="#9860a3"/><rect x="-0.5" y="305.0" width="24.5" height="24.5" fill="#9663a6"/><rect x="23.0" y="305.0" width="24.5" height="24.5" fill="#906cb0"/><rect x="46.5" y="305.0" width="24.5" height="24.5" fill="#906bb0"/><rect x="70.0" y="305.0" width="24.5" height="24.5" fill="#8e6db1"/><rect x="93.5" y="305.0" width="24.5" height="24.5" fill="#8b72b5"/><rect x="117.0" y="305.0" width="24.5" height="24.5" fill="#8779bb"/><rect x="140.5" y="305.0" width="24.5" height="24.5" fill="#8974b7"/><rect x="164.0" y="305.0" width="24.5" height="24.5" fill="#8b70b5"/><rect x="187.5" y="305.0" width="24.5" height="24.5" fill="#8c70b4"/><rect x="211.0" y="305.0" width="24.5" height="24.5" fill="#8a73b6"/><rect x="234.5" y="305.0" width="24.5" height="24.5" fill="#8877b9"/><rect x="258.0" y="305.0" width="24.5" height="24.5" fill="#867bbc"/><rect x="281.5" y="305.0" width="24.5" height="24.5" fill="#867cbd"/><rect x="305.0" y="305.0" width="24.5" height="24.5" fill="#877abb"/><rect x="328.5" y="305.0" width="24.5" height="24.5" fill="#8878ba"/><rect x="352.0" y="305.0" width="24.5" height="24.5" fill="#8878ba"/><rect x="375.5" y="305.0" width="24.5" height="24.5" fill="#8879bc"/><rect x="399.0" y="305.0" width="24.5" height="24.5" fill="#867cbe"/><rect x="422.5" y="305.0" width="24.5" height="24.5" fill="#847fc1"/><rect x="446.0" y="305.0" width="24.5" height="24.5" fill="#8381c3"/><rect x="469.5" y="305.0" width="24.5" height="24.5" fill="#8282c3"/><rect x="493.0" y="305.0" width="24.5" height="24.5" fill="#8381c2"/><rect x="516.5" y="305.0" width="24.5" height="24.5" fill="#8281c2"/><rect x="540.0" y="305.0" width="24.5" height="24.5" fill="#8182c4"/><rect x="563.5" y="305.0" width="24.5" height="24.5" fill="#7f84c5"/><rect x="587.0" y="305.0" width="24.5" height="24.5" fill="#7d86c7"/><rect x="610.5" y="305.0" width="24.5" height="24.5" fill="#7d87c7"/><rect x="634.0" y="305.0" width="24.5" height="24.5" fill="#7d87c7"/><rect x="657.5" y="305.0" width="24.5" height="24.5" fill="#7e87c7"/><rect x="681.0" y="305.0" width="24.5" height="24.5" fill="#8284c4"/><rect x="704.5" y="305.0" width="24.5" height="24.5" fill="#8883c1"/><rect x="728.0" y="305.0" width="24.5" height="24.5" fill="#8983c1"/><rect x="751.5" y="305.0" width="24.5" height="24.5" fill="#8783c2"/><rect x="775.0" y="305.0" width="24.5" height="24.5" fill="#8783c2"/><rect x="-47.5" y="328.5" width="24.5" height="24.5" fill="#8f70b2"/><rect x="-24.0" y="328.5" width="24.5" height="24.5" fill="#8f70b2"/><rect x="-0.5" y="328.5" width="24.5" height="24.5" fill="#8f70b2"/><rect x="23.0" y="328.5" width="24.5" height="24.5" fill="#8e70b4"/><rect x="46.5" y="328.5" width="24.5" height="24.5" fill="#8e70b4"/><rect x="70.0" y="328.5" width="24.5" height="24.5" fill="#8a76b8"/><rect x="93.5" y="328.5" width="24.5" height="24.5" fill="#8281c1"/><rect x="117.0" y="328.5" width="24.5" height="24.5" fill="#8183c3"/><rect x="140.5" y="328.5" width="24.5" height="24.5" fill="#867bbd"/><rect x="164.0" y="328.5" width="24.5" height="24.5" fill="#8976b9"/><rect x="187.5" y="328.5" width="24.5" height="24.5" fill="#8976b8"/><rect x="211.0" y="328.5" width="24.5" height="24.5" fill="#8878ba"/><rect x="234.5" y="328.5" width="24.5" height="24.5" fill="#857fbf"/><rect x="258.0" y="328.5" width="24.5" height="24.5" fill="#8185c4"/><rect x="281.5" y="328.5" width="24.5" height="24.5" fill="#8185c4"/><rect x="305.0" y="328.5" width="24.5" height="24.5" fill="#8481c1"/><rect x="328.5" y="328.5" width="24.5" height="24.5" fill="#867dbe"/><rect x="352.0" y="328.5" width="24.5" height="24.5" fill="#877dbe"/><rect x="375.5" y="328.5" width="24.5" height="24.5" fill="#867ebf"/><rect x="399.0" y="328.5" width="24.5" height="24.5" fill="#8580c1"/><rect x="422.5" y="328.5" width="24.5" height="24.5" fill="#8383c4"/><rect x="446.0" y="328.5" width="24.5" height="24.5" fill="#8186c7"/><rect x="469.5" y="328.5" width="24.5" height="24.5" fill="#8187c7"/><rect x="493.0" y="328.5" width="24.5" height="24.5" fill="#8284c5"/><rect x="516.5" y="328.5" width="24.5" height="24.5" fill="#8283c4"/><rect x="540.0" y="328.5" width="24.5" height="24.5" fill="#8084c5"/><rect x="563.5" y="328.5" width="24.5" height="24.5" fill="#7e86c6"/><rect x="587.0" y="328.5" width="24.5" height="24.5" fill="#7d87c7"/><rect x="610.5" y="328.5" width="24.5" height="24.5" fill="#7c88c8"/><rect x="634.0" y="328.5" width="24.5" height="24.5" fill="#7e86c7"/><rect x="657.5" y="328.5" width="24.5" height="24.5" fill="#8184c5"/><rect x="681.0" y="328.5" width="24.5" height="24.5" fill="#8483c3"/><rect x="704.5" y="328.5" width="24.5" height="24.5" fill="#8a82c0"/><rect x="728.0" y="328.5" width="24.5" height="24.5" fill="#8e82be"/><rect x="751.5" y="328.5" width="24.5" height="24.5" fill="#8d82bf"/><rect x="775.0" y="328.5" width="24.5" height="24.5" fill="#8d82bf"/><rect x="-47.5" y="352.0" width="24.5" height="24.5" fill="#8a7cba"/><rect x="-24.0" y="352.0" width="24.5" height="24.5" fill="#8a7cba"/><rect x="-0.5" y="352.0" width="24.5" height="24.5" fill="#8b7ab9"/><rect x="23.0" y="352.0" width="24.5" height="24.5" fill="#8d73b6"/><rect x="46.5" y="352.0" width="24.5" height="24.5" fill="#8a76b8"/><rect x="70.0" y="352.0" width="24.5" height="24.5" fill="#8481c1"/><rect x="93.5" y="352.0" width="24.5" height="24.5" fill="#8382c2"/><rect x="117.0" y="352.0" width="24.5" height="24.5" fill="#837fc0"/><rect x="140.5" y="352.0" width="24.5" height="24.5" fill="#867cbe"/><rect x="164.0" y="352.0" width="24.5" height="24.5" fill="#877bbd"/><rect x="187.5" y="352.0" width="24.5" height="24.5" fill="#877cbd"/><rect x="211.0" y="352.0" width="24.5" height="24.5" fill="#867dbe"/><rect x="234.5" y="352.0" width="24.5" height="24.5" fill="#8382c2"/><rect x="258.0" y="352.0" width="24.5" height="24.5" fill="#8087c6"/><rect x="281.5" y="352.0" width="24.5" height="24.5" fill="#8087c6"/><rect x="305.0" y="352.0" width="24.5" height="24.5" fill="#8384c3"/><rect x="328.5" y="352.0" width="24.5" height="24.5" fill="#8581c1"/><rect x="352.0" y="352.0" width="24.5" height="24.5" fill="#8682c2"/><rect x="375.5" y="352.0" width="24.5" height="24.5" fill="#8583c3"/><rect x="399.0" y="352.0" width="24.5" height="24.5" fill="#8483c3"/><rect x="422.5" y="352.0" width="24.5" height="24.5" fill="#8285c5"/><rect x="446.0" y="352.0" width="24.5" height="24.5" fill="#8088c8"/><rect x="469.5" y="352.0" width="24.5" height="24.5" fill="#8088c8"/><rect x="493.0" y="352.0" width="24.5" height="24.5" fill="#8185c6"/><rect x="516.5" y="352.0" width="24.5" height="24.5" fill="#8284c4"/><rect x="540.0" y="352.0" width="24.5" height="24.5" fill="#8085c5"/><rect x="563.5" y="352.0" width="24.5" height="24.5" fill="#7e87c7"/><rect x="587.0" y="352.0" width="24.5" height="24.5" fill="#7c88c8"/><rect x="610.5" y="352.0" width="24.5" height="24.5" fill="#7d87c7"/><rect x="634.0" y="352.0" width="24.5" height="24.5" fill="#8084c5"/><rect x="657.5" y="352.0" width="24.5" height="24.5" fill="#8281c3"/><rect x="681.0" y="352.0" width="24.5" height="24.5" fill="#8381c2"/><rect x="704.5" y="352.0" width="24.5" height="24.5" fill="#8881c1"/><rect x="728.0" y="352.0" width="24.5" height="24.5" fill="#8a81c0"/><rect x="751.5" y="352.0" width="24.5" height="24.5" fill="#8a80c0"/><rect x="775.0" y="352.0" width="24.5" height="24.5" fill="#8a80c0"/><rect x="-47.5" y="375.5" width="24.5" height="24.5" fill="#8a7cbb"/><rect x="-24.0" y="375.5" width="24.5" height="24.5" fill="#8a7cbb"/><rect x="-0.5" y="375.5" width="24.5" height="24.5" fill="#8a7cba"/><rect x="23.0" y="375.5" width="24.5" height="24.5" fill="#8b79b9"/><rect x="46.5" y="375.5" width="24.5" height="24.5" fill="#897abb"/><rect x="70.0" y="375.5" width="24.5" height="24.5" fill="#8481c2"/><rect x="93.5" y="375.5" width="24.5" height="24.5" fill="#8382c2"/><rect x="117.0" y="375.5" width="24.5" height="24.5" fill="#857ebf"/><rect x="140.5" y="375.5" width="24.5" height="24.5" fill="#867fc0"/><rect x="164.0" y="375.5" width="24.5" height="24.5" fill="#8583c3"/><rect x="187.5" y="375.5" width="24.5" height="24.5" fill="#8585c4"/><rect x="211.0" y="375.5" width="24.5" height="24.5" fill="#8582c1"/><rect x="234.5" y="375.5" width="24.5" height="24.5" fill="#8482c1"/><rect x="258.0" y="375.5" width="24.5" height="24.5" fill="#8285c4"/><rect x="281.5" y="375.5" width="24.5" height="24.5" fill="#8285c4"/><rect x="305.0" y="375.5" width="24.5" height="24.5" fill="#8484c3"/><rect x="328.5" y="375.5" width="24.5" height="24.5" fill="#8586c4"/><rect x="352.0" y="375.5" width="24.5" height="24.5" fill="#858ac7"/><rect x="375.5" y="375.5" width="24.5" height="24.5" fill="#858ac8"/><rect x="399.0" y="375.5" width="24.5" height="24.5" fill="#8487c6"/><rect x="422.5" y="375.5" width="24.5" height="24.5" fill="#8385c5"/><rect x="446.0" y="375.5" width="24.5" height="24.5" fill="#8186c6"/><rect x="469.5" y="375.5" width="24.5" height="24.5" fill="#8186c6"/><rect x="493.0" y="375.5" width="24.5" height="24.5" fill="#8285c5"/><rect x="516.5" y="375.5" width="24.5" height="24.5" fill="#8285c5"/><rect x="540.0" y="375.5" width="24.5" height="24.5" fill="#8286c5"/><rect x="563.5" y="375.5" width="24.5" height="24.5" fill="#7f87c6"/><rect x="587.0" y="375.5" width="24.5" height="24.5" fill="#7d87c7"/><rect x="610.5" y="375.5" width="24.5" height="24.5" fill="#7e86c6"/><rect x="634.0" y="375.5" width="24.5" height="24.5" fill="#8183c4"/><rect x="657.5" y="375.5" width="24.5" height="24.5" fill="#8280c2"/><rect x="681.0" y="375.5" width="24.5" height="24.5" fill="#8280c2"/><rect x="704.5" y="375.5" width="24.5" height="24.5" fill="#8781c1"/><rect x="728.0" y="375.5" width="24.5" height="24.5" fill="#8a80c0"/><rect x="751.5" y="375.5" width="24.5" height="24.5" fill="#8a80c0"/><rect x="775.0" y="375.5" width="24.5" height="24.5" fill="#8a80c0"/><rect x="-47.5" y="399.0" width="24.5" height="24.5" fill="#8887c5"/><rect x="-24.0" y="399.0" width="24.5" height="24.5" fill="#8887c5"/><rect x="-0.5" y="399.0" width="24.5" height="24.5" fill="#8985c4"/><rect x="23.0" y="399.0" width="24.5" height="24.5" fill="#8a7ebe"/><rect x="46.5" y="399.0" width="24.5" height="24.5" fill="#897bbc"/><rect x="70.0" y="399.0" width="24.5" height="24.5" fill="#877dbe"/><rect x="93.5" y="399.0" width="24.5" height="24.5" fill="#867ebf"/><rect x="117.0" y="399.0" width="24.5" height="24.5" fill="#867ebf"/><rect x="140.5" y="399.0" width="24.5" height="24.5" fill="#8584c3"/><rect x="164.0" y="399.0" width="24.5" height="24.5" fill="#838cca"/><rect x="187.5" y="399.0" width="24.5" height="24.5" fill="#828cca"/><rect x="211.0" y="399.0" width="24.5" height="24.5" fill="#8486c5"/><rect x="234.5" y="399.0" width="24.5" height="24.5" fill="#8582c2"/><rect x="258.0" y="399.0" width="24.5" height="24.5" fill="#8482c1"/><rect x="281.5" y="399.0" width="24.5" height="24.5" fill="#8482c2"/><rect x="305.0" y="399.0" width="24.5" height="24.5" fill="#8584c3"/><rect x="328.5" y="399.0" width="24.5" height="24.5" fill="#858ac7"/><rect x="352.0" y="399.0" width="24.5" height="24.5" fill="#848fcb"/><rect x="375.5" y="399.0" width="24.5" height="24.5" fill="#848fcb"/><rect x="399.0" y="399.0" width="24.5" height="24.5" fill="#848ac8"/><rect x="422.5" y="399.0" width="24.5" height="24.5" fill="#8486c5"/><rect x="446.0" y="399.0" width="24.5" height="24.5" fill="#8384c5"/><rect x="469.5" y="399.0" width="24.5" height="24.5" fill="#8384c5"/><rect x="493.0" y="399.0" width="24.5" height="24.5" fill="#8384c4"/><rect x="516.5" y="399.0" width="24.5" height="24.5" fill="#8386c5"/><rect x="540.0" y="399.0" width="24.5" height="24.5" fill="#8488c6"/><rect x="563.5" y="399.0" width="24.5" height="24.5" fill="#8388c6"/><rect x="587.0" y="399.0" width="24.5" height="24.5" fill="#8186c6"/><rect x="610.5" y="399.0" width="24.5" height="24.5" fill="#8185c5"/><rect x="634.0" y="399.0" width="24.5" height="24.5" fill="#8282c3"/><rect x="657.5" y="399.0" width="24.5" height="24.5" fill="#8381c2"/><rect x="681.0" y="399.0" width="24.5" height="24.5" fill="#8481c1"/><rect x="704.5" y="399.0" width="24.5" height="24.5" fill="#8980c0"/><rect x="728.0" y="399.0" width="24.5" height="24.5" fill="#8d80be"/><rect x="751.5" y="399.0" width="24.5" height="24.5" fill="#8d80bd"/><rect x="775.0" y="399.0" width="24.5" height="24.5" fill="#8d80bd"/><rect x="-47.5" y="422.5" width="24.5" height="24.5" fill="#8888c6"/><rect x="-24.0" y="422.5" width="24.5" height="24.5" fill="#8888c6"/><rect x="-0.5" y="422.5" width="24.5" height="24.5" fill="#8887c5"/><rect x="23.0" y="422.5" width="24.5" height="24.5" fill="#897fbf"/><rect x="46.5" y="422.5" width="24.5" height="24.5" fill="#897bbc"/><rect x="70.0" y="422.5" width="24.5" height="24.5" fill="#887bbc"/><rect x="93.5" y="422.5" width="24.5" height="24.5" fill="#877cbd"/><rect x="117.0" y="422.5" width="24.5" height="24.5" fill="#867ebf"/><rect x="140.5" y="422.5" width="24.5" height="24.5" fill="#8485c4"/><rect x="164.0" y="422.5" width="24.5" height="24.5" fill="#828dca"/><rect x="187.5" y="422.5" width="24.5" height="24.5" fill="#828dcb"/><rect x="211.0" y="422.5" width="24.5" height="24.5" fill="#8488c6"/><rect x="234.5" y="422.5" width="24.5" height="24.5" fill="#8582c2"/><rect x="258.0" y="422.5" width="24.5" height="24.5" fill="#8581c1"/><rect x="281.5" y="422.5" width="24.5" height="24.5" fill="#8581c1"/><rect x="305.0" y="422.5" width="24.5" height="24.5" fill="#8584c3"/><rect x="328.5" y="422.5" width="24.5" height="24.5" fill="#858bc8"/><rect x="352.0" y="422.5" width="24.5" height="24.5" fill="#8490cc"/><rect x="375.5" y="422.5" width="24.5" height="24.5" fill="#8490cc"/><rect x="399.0" y="422.5" width="24.5" height="24.5" fill="#848bc9"/><rect x="422.5" y="422.5" width="24.5" height="24.5" fill="#8486c5"/><rect x="446.0" y="422.5" width="24.5" height="24.5" fill="#8484c4"/><rect x="469.5" y="422.5" width="24.5" height="24.5" fill="#8384c4"/><rect x="493.0" y="422.5" width="24.5" height="24.5" fill="#8384c4"/><rect x="516.5" y="422.5" width="24.5" height="24.5" fill="#8386c5"/><rect x="540.0" y="422.5" width="24.5" height="24.5" fill="#8488c6"/><rect x="563.5" y="422.5" width="24.5" height="24.5" fill="#8488c6"/><rect x="587.0" y="422.5" width="24.5" height="24.5" fill="#8286c5"/><rect x="610.5" y="422.5" width="24.5" height="24.5" fill="#8284c4"/><rect x="634.0" y="422.5" width="24.5" height="24.5" fill="#8282c3"/><rect x="657.5" y="422.5" width="24.5" height="24.5" fill="#8381c2"/><rect x="681.0" y="422.5" width="24.5" height="24.5" fill="#8581c1"/><rect x="704.5" y="422.5" width="24.5" height="24.5" fill="#8a80bf"/><rect x="728.0" y="422.5" width="24.5" height="24.5" fill="#8e80bd"/><rect x="751.5" y="422.5" width="24.5" height="24.5" fill="#8e80bd"/><rect x="775.0" y="422.5" width="24.5" height="24.5" fill="#8e80bd"/><rect x="-47.5" y="446.0" width="24.5" height="24.5" fill="#8888c6"/><rect x="-24.0" y="446.0" width="24.5" height="24.5" fill="#8888c6"/><rect x="-0.5" y="446.0" width="24.5" height="24.5" fill="#8887c5"/><rect x="23.0" y="446.0" width="24.5" height="24.5" fill="#897fbf"/><rect x="46.5" y="446.0" width="24.5" height="24.5" fill="#897bbc"/><rect x="70.0" y="446.0" width="24.5" height="24.5" fill="#887bbc"/><rect x="93.5" y="446.0" width="24.5" height="24.5" fill="#877cbd"/><rect x="117.0" y="446.0" width="24.5" height="24.5" fill="#867ebf"/><rect x="140.5" y="446.0" width="24.5" height="24.5" fill="#8485c4"/><rect x="164.0" y="446.0" width="24.5" height="24.5" fill="#828dca"/><rect x="187.5" y="446.0" width="24.5" height="24.5" fill="#828dcb"/><rect x="211.0" y="446.0" width="24.5" height="24.5" fill="#8488c6"/><rect x="234.5" y="446.0" width="24.5" height="24.5" fill="#8582c2"/><rect x="258.0" y="446.0" width="24.5" height="24.5" fill="#8581c1"/><rect x="281.5" y="446.0" width="24.5" height="24.5" fill="#8581c1"/><rect x="305.0" y="446.0" width="24.5" height="24.5" fill="#8584c3"/><rect x="328.5" y="446.0" width="24.5" height="24.5" fill="#858bc8"/><rect x="352.0" y="446.0" width="24.5" height="24.5" fill="#8490cc"/><rect x="375.5" y="446.0" width="24.5" height="24.5" fill="#8490cc"/><rect x="399.0" y="446.0" width="24.5" height="24.5" fill="#848bc9"/><rect x="422.5" y="446.0" width="24.5" height="24.5" fill="#8486c5"/><rect x="446.0" y="446.0" width="24.5" height="24.5" fill="#8484c4"/><rect x="469.5" y="446.0" width="24.5" height="24.5" fill="#8384c4"/><rect x="493.0" y="446.0" width="24.5" height="24.5" fill="#8384c4"/><rect x="516.5" y="446.0" width="24.5" height="24.5" fill="#8386c5"/><rect x="540.0" y="446.0" width="24.5" height="24.5" fill="#8488c6"/><rect x="563.5" y="446.0" width="24.5" height="24.5" fill="#8488c6"/><rect x="587.0" y="446.0" width="24.5" height="24.5" fill="#8286c5"/><rect x="610.5" y="446.0" width="24.5" height="24.5" fill="#8284c4"/><rect x="634.0" y="446.0" width="24.5" height="24.5" fill="#8282c3"/><rect x="657.5" y="446.0" width="24.5" height="24.5" fill="#8381c2"/><rect x="681.0" y="446.0" width="24.5" height="24.5" fill="#8581c1"/><rect x="704.5" y="446.0" width="24.5" height="24.5" fill="#8a80bf"/><rect x="728.0" y="446.0" width="24.5" height="24.5" fill="#8e80bd"/><rect x="751.5" y="446.0" width="24.5" height="24.5" fill="#8e80bd"/><rect x="775.0" y="446.0" width="24.5" height="24.5" fill="#8e80bd"/></g>
<defs><filter id="bw" x="0" y="0" width="752" height="423" filterUnits="userSpaceOnUse"><feGaussianBlur stdDeviation="7"/></filter></defs>
<g filter="url(#bw)" opacity="0.6">
<ellipse cx="680" cy="389" rx="95" ry="11" fill="#8c6cae" transform="rotate(-8 680 389)"/>
<ellipse cx="705" cy="318" rx="75" ry="13" fill="#9682c0" transform="rotate(-14 705 318)" opacity="0.8"/>
<ellipse cx="560" cy="424" rx="110" ry="7" fill="#8a6eb2" transform="rotate(-3 560 424)"/>
</g>
</svg>
<div id="topbar"></div>
<div style="position:absolute;left:0;top:17px;width:752px;height:1px;background:rgba(255,255,255,.07)"></div>
<div style="position:absolute;left:749px;top:17px;width:3px;height:3px;background:radial-gradient(circle at 0 100%,transparent 2.4px,#000 3.2px)"></div>
<svg class="tb" style="left:0;top:0" width="752" height="17" viewBox="0 0 752 17">
 <g fill="none" stroke="#fff" stroke-width="1.2" stroke-linejoin="round">
  <path d="M661.2,4.2 L662.5,7.1 L665.6,7.4 L663.3,9.4 L664,12.5 L661.2,10.9 L658.4,12.5 L659.1,9.4 L656.8,7.4 L659.9,7.1 Z"/>
 </g>
 <g fill="#fff">
  <rect x="688.3" y="4" width="3" height="3"/>
  <rect x="689.3" y="7" width="1" height="2"/>
  <rect x="686.3" y="8.5" width="7" height="1"/>
  <rect x="686.3" y="8.5" width="1" height="2"/>
  <rect x="692.3" y="8.5" width="1" height="2"/>
  <rect x="685" y="10.5" width="3.3" height="3"/>
  <rect x="691.2" y="10.5" width="3.3" height="3"/>
  <path d="M702,6.8 H704 L706.8,4.5 V12.5 L704,10.2 H702 Z"/>
 </g>
 <g fill="none" stroke="#fff" stroke-width="1.1">
  <path d="M708,6.5 Q709,8.5 708,10.5"/>
  <path d="M709.8,5 Q711.8,8.5 709.8,12"/>
  <path d="M722.9,5.5 A3.8,3.8 0 1 0 727.1,5.5"/>
  <path d="M725,3 V7.8"/>
 </g>
 <path d="M736.3,7 H742.3 L739.3,10.3 Z" fill="#fff"/>
</svg>
<div id="win">
  <div id="hb"></div>
  <div id="side"></div>
</div>
<!-- headerbar buttons -->
<div class="btn" style="left:138px;top:53px;width:42px;"></div>
<div style="position:absolute;left:158px;top:54px;width:1px;height:20px;background:#c8c8c8"></div>
<div class="btn" style="left:184px;top:53px;width:84px;"></div>
<div style="position:absolute;left:200px;top:54px;width:52px;height:20px;background:#dadada;border-left:1px solid #c4c4c4;border-right:1px solid #c4c4c4"></div>
<div class="btn rb" style="left:482px;top:53px;width:21px;"></div>
<div class="btn rb" style="left:507px;top:53px;width:21px;"></div>
<div class="btn rb" style="left:532px;top:53px;width:21px;"></div>
<div style="position:absolute;left:557px;top:54px;width:1px;height:20px;background:#d8d8d8"></div>
<svg style="position:absolute;left:0;top:0" width="752" height="423" viewBox="0 0 752 423">
 <g fill="none" stroke="#5c5c5c" stroke-width="1.45" stroke-linecap="round" stroke-linejoin="round">
  <path d="M150.5,60.6 L147.1,64 L150.5,67.4"/>
  <path d="M166.9,60.6 L170.3,64 L166.9,67.4"/>
 </g>
 <path d="M193.3,60.6 L189.5,63.9 L193.3,67.2 Z" fill="#8a8a8a"/>
 <path d="M257.7,60.6 L261.5,63.9 L257.7,67.2 Z" fill="#8a8a8a"/>
 <g fill="none" stroke="#2e3436" stroke-linejoin="miter">
  <path d="M205.2,64.3 L209.7,60.3 L214.2,64.3" stroke-width="1.5"/>
  <path d="M206.6,63.6 V67.2 H208.6 V64.8 H210.8 V67.2 H212.8 V63.6" stroke-width="1.3"/>
 </g>
 <g fill="none" stroke="#2e3436" stroke-width="1.5" stroke-linecap="round">
  <circle cx="491.3" cy="62.6" r="2.9"/>
  <path d="M493.4,64.7 L496,67.3"/>
 </g>
 <g fill="#2e3436">
  <rect x="513.9" y="61.1" width="2.3" height="2"/>
  <rect x="513.9" y="65" width="2.3" height="2"/>
  <rect x="517.9" y="61.6" width="3.7" height="1.2" fill="#555"/>
  <rect x="517.9" y="65.4" width="3.7" height="1.2"/>
  <rect x="539.4" y="61.2" width="6.8" height="1.2"/>
  <rect x="539.4" y="63.5" width="6.8" height="1.2"/>
  <rect x="539.4" y="65.8" width="6.8" height="1.2"/>
 </g>
 <g stroke="#2e3436" stroke-width="1.6" stroke-linecap="butt">
  <path d="M569.4,61.9 L574.4,66.6 M574.4,61.9 L569.4,66.6"/>
 </g>
</svg>
<div class="ht" style="position:absolute;left:218.6px;top:57.8px;font-size:8.75px;font-weight:bold;color:#1a1a1a;line-height:12px">Home</div>
<!-- sidebar -->
<div class="si sel" style="top:105px;height:23px"></div>
<div class="st" style="top:87.65px">Recent</div>
<div class="st" style="top:111.75px;color:#fff">Home</div>
<div class="st" style="top:135.45px">Documents</div>
<div class="st" style="top:159.45px">Downloads</div>
<div class="st" style="top:183.05px">Music</div>
<div class="st" style="top:206.95px">Pictures</div>
<div class="st" style="top:230.65px">Videos</div>
<div class="st" style="top:254.65px">Trash</div>
<svg style="position:absolute;left:0;top:0" width="752" height="423" viewBox="0 0 752 423">
 <g fill="none" stroke="#1c1c1c" stroke-width="1.2">
  <circle cx="147.5" cy="92.4" r="4.1"/>
  <path d="M146,90.8 L147.5,92.4 L149,90.8" stroke-width="0.9"/>
 </g>
 <g fill="none" stroke="#fff" stroke-width="1.2" stroke-linejoin="miter">
  <path d="M143.4,116.4 L147.9,112.4 L152.4,116.4"/>
  <path d="M144.6,115.5 V120 H146.9 V117.4 H149 V120 H151.3 V115.5"/>
 </g>
 <g fill="none" stroke="#1c1c1c" stroke-width="1.15" stroke-linejoin="round">
  <path d="M144.6,136.6 H148.5 L151.3,139.4 V144.4 H144.6 Z"/>
 </g>
 <path d="M148.2,136.2 L151.8,139.8 H148.2 Z" fill="#1c1c1c"/>
 <g fill="#1c1c1c">
  <rect x="147.3" y="159.7" width="1.2" height="1.1"/>
  <rect x="147.3" y="161.7" width="1.2" height="1.1"/>
  <rect x="147.3" y="163.5" width="1.2" height="1.1"/>
 </g>
 <path d="M144.6,164.4 L147.9,167.3 L151.2,164.4" fill="none" stroke="#1c1c1c" stroke-width="1.4"/>
 <g fill="none" stroke="#1c1c1c" stroke-width="1.1">
  <path d="M146.4,190.2 V184.9 H151.4 V190.2"/>
  <circle cx="144.8" cy="190.2" r="1.6"/>
  <circle cx="149.8" cy="190.2" r="1.6"/>
 </g>
 <g fill="#1c1c1c">
  <path d="M143.4,209.6 Q143.4,209 144,209 H146 L146.6,208 H149.6 L150.2,209 H151.5 Q152.1,209 152.1,209.6 V215.1 Q152.1,215.7 151.5,215.7 H144 Q143.4,215.7 143.4,215.1 Z"/>
 </g>
 <circle cx="147.8" cy="212.3" r="1.6" fill="none" stroke="#f3f3f3" stroke-width="0.9"/>
 <g fill="#1c1c1c">
  <path d="M143.1,233.9 L145.6,235.85 L143.1,237.8 Z"/>
  <rect x="145.9" y="232.8" width="6.4" height="6.1" rx="0.4"/>
 </g>
 <g fill="none" stroke="#1c1c1c" stroke-width="1.1">
  <path d="M143.2,255.9 H152"/>
  <path d="M144.3,256.6 V262.8 Q144.3,264.2 145.7,264.2 H149.5 Q150.9,264.2 150.9,262.8 V256.6" stroke-width="1.2"/>
  <path d="M147.6,257.8 V262.6" stroke-width="1.1"/>
 </g>
 <path d="M144.6,255.4 Q147.6,253.4 150.6,255.4" fill="none" stroke="#1c1c1c" stroke-width="1"/>
</svg>
<svg class="fold" style="left:298.1px;top:92.3px" width="53" height="52" viewBox="0 0 53 52">
 <path d="M2,50 V1.2 Q2,0 3.2,0 H21 L26.7,5.6 H48.7 Q49.9,5.6 49.9,6.8 V50 Z" fill="#c3af89"/>
 <path d="M0.2,48.7 V19.6 Q0.2,18.4 1.4,18.4 H15.8 L19.8,13.2 H51.3 Q52.5,13.2 52.5,14.4 V48.7 Q52.5,49.9 51.3,49.9 H1.4 Q0.2,49.9 0.2,48.7 Z" fill="url(#fg)"/><path d="M0.6,18.9 H15.9 L19.9,13.7 H52" fill="none" stroke="#efe2ca" stroke-width="0.9"/>
 <rect x="1" y="48.6" width="51" height="0.9" fill="#eedcbe"/><rect x="0.9" y="49.5" width="51" height="1" fill="#c6ae8c"/>
 <g fill="none" stroke="#c9b38f" stroke-width="1.5">
   <path d="M14.7,24 L17.9,24 L14.7,27.2 Z M38.8,24 L35.6,24 L38.8,27.2 Z M14.7,39.6 L17.9,39.6 L14.7,36.4 Z M38.8,39.6 L35.6,39.6 L38.8,36.4 Z" fill="#c9b38f" stroke="none"/>
   <path d="M21.9,28.7 H25.9 L29.4,32.2 V37.6 H21.9 Z" stroke-linejoin="round" stroke-width="1.8"/>
 </g>
</svg>
<div class="lbl" style="left:284.4px;top:149.3px">Desktop</div>
<svg class="fold" style="left:398.1px;top:92.3px" width="53" height="52" viewBox="0 0 53 52">
 <path d="M2,50 V1.2 Q2,0 3.2,0 H21 L26.7,5.6 H48.7 Q49.9,5.6 49.9,6.8 V50 Z" fill="#c3af89"/>
 <path d="M0.2,48.7 V19.6 Q0.2,18.4 1.4,18.4 H15.8 L19.8,13.2 H51.3 Q52.5,13.2 52.5,14.4 V48.7 Q52.5,49.9 51.3,49.9 H1.4 Q0.2,49.9 0.2,48.7 Z" fill="url(#fg)"/><path d="M0.6,18.9 H15.9 L19.9,13.7 H52" fill="none" stroke="#efe2ca" stroke-width="0.9"/>
 <rect x="1" y="48.6" width="51" height="0.9" fill="#eedcbe"/><rect x="0.9" y="49.5" width="51" height="1" fill="#c6ae8c"/>
 <g fill="none" stroke="#c9b38f" stroke-width="1.5" stroke-linejoin="round">
   <path d="M19.9,27.1 H25.9 L30.4,31.6 V42 H19.9 Z" stroke-width="2"/>
   <path d="M25.9,27.1 L30.4,31.6 H25.9 Z" fill="#c9b38f" stroke-width="0.8"/>
   <path d="M24.2,23.8 H30.8 L35.1,28.1 V37.6" stroke-width="1.6"/>
 </g>
</svg>
<div class="lbl" style="left:384.4px;top:149.3px">Documents</div>
<svg class="fold" style="left:497.9px;top:92.3px" width="53" height="52" viewBox="0 0 53 52">
 <path d="M2,50 V1.2 Q2,0 3.2,0 H21 L26.7,5.6 H48.7 Q49.9,5.6 49.9,6.8 V50 Z" fill="#c3af89"/>
 <path d="M0.2,48.7 V19.6 Q0.2,18.4 1.4,18.4 H15.8 L19.8,13.2 H51.3 Q52.5,13.2 52.5,14.4 V48.7 Q52.5,49.9 51.3,49.9 H1.4 Q0.2,49.9 0.2,48.7 Z" fill="url(#fg)"/><path d="M0.6,18.9 H15.9 L19.9,13.7 H52" fill="none" stroke="#efe2ca" stroke-width="0.9"/>
 <rect x="1" y="48.6" width="51" height="0.9" fill="#eedcbe"/><rect x="0.9" y="49.5" width="51" height="1" fill="#c6ae8c"/>
 <g fill="#c9b38f">
   <circle cx="26.1" cy="23.8" r="1.2"/><circle cx="26.1" cy="28.5" r="1.2"/><circle cx="26.1" cy="33.1" r="1.2"/>
 </g>
 <path d="M19.3,33.8 L26.1,40.3 L32.5,33.8" fill="none" stroke="#c9b38f" stroke-width="1.7"/>
</svg>
<div class="lbl" style="left:484.1px;top:149.3px">Downloads</div>
<svg class="fold" style="left:298.1px;top:175.1px" width="53" height="52" viewBox="0 0 53 52">
 <path d="M2,50 V1.2 Q2,0 3.2,0 H21 L26.7,5.6 H48.7 Q49.9,5.6 49.9,6.8 V50 Z" fill="#c3af89"/>
 <path d="M0.2,48.7 V19.6 Q0.2,18.4 1.4,18.4 H15.8 L19.8,13.2 H51.3 Q52.5,13.2 52.5,14.4 V48.7 Q52.5,49.9 51.3,49.9 H1.4 Q0.2,49.9 0.2,48.7 Z" fill="url(#fg)"/><path d="M0.6,18.9 H15.9 L19.9,13.7 H52" fill="none" stroke="#efe2ca" stroke-width="0.9"/>
 <rect x="1" y="48.6" width="51" height="0.9" fill="#eedcbe"/><rect x="0.9" y="49.5" width="51" height="1" fill="#c6ae8c"/>
 <g fill="none" stroke="#c9b38f" stroke-width="1.6">
   <path d="M24,36.9 V24.9 H34.7 V36.9"/>
   <circle cx="20.5" cy="36.9" r="3.5"/>
   <circle cx="31.2" cy="36.9" r="3.5"/>
 </g>
</svg>
<div class="lbl" style="left:284.4px;top:231.5px">Music</div>
<svg class="fold" style="left:398.1px;top:175.1px" width="53" height="52" viewBox="0 0 53 52">
 <path d="M2,50 V1.2 Q2,0 3.2,0 H21 L26.7,5.6 H48.7 Q49.9,5.6 49.9,6.8 V50 Z" fill="#c3af89"/>
 <path d="M0.2,48.7 V19.6 Q0.2,18.4 1.4,18.4 H15.8 L19.8,13.2 H51.3 Q52.5,13.2 52.5,14.4 V48.7 Q52.5,49.9 51.3,49.9 H1.4 Q0.2,49.9 0.2,48.7 Z" fill="url(#fg)"/><path d="M0.6,18.9 H15.9 L19.9,13.7 H52" fill="none" stroke="#efe2ca" stroke-width="0.9"/>
 <rect x="1" y="48.6" width="51" height="0.9" fill="#eedcbe"/><rect x="0.9" y="49.5" width="51" height="1" fill="#c6ae8c"/>
 <g fill="none" stroke="#c9b38f" stroke-width="1.6" stroke-linejoin="round">
   <path d="M20.6,39.1 H18.6 Q16.6,39.1 16.6,37.1 V27.2 Q16.6,25.2 18.6,25.2 H20.2 Q21,25.2 21.6,24 Q22.2,23.2 23,23.2 H30.3 Q31.1,23.2 31.7,24 Q32.3,25.2 33.1,25.2 H35.8 Q37.8,25.2 37.8,27.2 V37.1 Q37.8,39.1 35.8,39.1 H33.2"/>
   <circle cx="27" cy="33.1" r="5.4"/>
   <circle cx="27" cy="33.1" r="2.5"/>
 </g>
</svg>
<div class="lbl" style="left:384.4px;top:231.5px">Pictures</div>
<svg class="fold" style="left:497.9px;top:175.1px" width="53" height="52" viewBox="0 0 53 52">
 <path d="M2,50 V1.2 Q2,0 3.2,0 H21 L26.7,5.6 H48.7 Q49.9,5.6 49.9,6.8 V50 Z" fill="#c3af89"/>
 <path d="M0.2,48.7 V19.6 Q0.2,18.4 1.4,18.4 H15.8 L19.8,13.2 H51.3 Q52.5,13.2 52.5,14.4 V48.7 Q52.5,49.9 51.3,49.9 H1.4 Q0.2,49.9 0.2,48.7 Z" fill="url(#fg)"/><path d="M0.6,18.9 H15.9 L19.9,13.7 H52" fill="none" stroke="#efe2ca" stroke-width="0.9"/>
 <rect x="1" y="48.6" width="51" height="0.9" fill="#eedcbe"/><rect x="0.9" y="49.5" width="51" height="1" fill="#c6ae8c"/>
 
</svg>
<div class="lbl" style="left:484.1px;top:231.5px">Projects</div>
<svg class="fold" style="left:298.1px;top:258.7px" width="53" height="52" viewBox="0 0 53 52">
 <defs><linearGradient id="og" x1="0" y1="0" x2="0" y2="1"><stop offset="0" stop-color="#fe9d32"/><stop offset="1" stop-color="#f68e1c"/></linearGradient><linearGradient id="ob" x1="0" y1="0" x2="0" y2="1"><stop offset="0" stop-color="#f07200"/><stop offset="0.3" stop-color="#f57e0a"/><stop offset="1" stop-color="#f07808"/></linearGradient>
 <filter id="glow" x="-30%" y="-30%" width="160%" height="160%"><feGaussianBlur stdDeviation="0.9"/></filter></defs>
 <path d="M2,50 V1 Q2,0 3,0 H21 L26.7,5.6 H49.8 Q50.8,5.6 50.8,6.6 V50 Z" fill="url(#ob)"/>
 <path d="M0,49.3 V19.2 Q0,18.4 0.8,18.4 H15.8 L19.8,13.2 H51.7 Q52.5,13.2 52.5,14 V49.3 Z" fill="url(#og)"/>
 <rect x="0" y="49.3" width="52.5" height="1.1" fill="#e47812"/>
 <path d="M26.00,21.30 L29.29,27.77 L36.46,28.90 L31.33,34.03 L32.47,41.20 L26.00,37.90 L19.53,41.20 L20.67,34.03 L15.54,28.90 L22.71,27.77 Z" fill="none" stroke="#fff3d8" stroke-width="3" stroke-linejoin="round" filter="url(#glow)" opacity="0.8"/>
 <path d="M26.00,21.30 L29.29,27.77 L36.46,28.90 L31.33,34.03 L32.47,41.20 L26.00,37.90 L19.53,41.20 L20.67,34.03 L15.54,28.90 L22.71,27.77 Z" fill="none" stroke="#fff" stroke-width="1.6" stroke-linejoin="round"/>
</svg>
<div class="lbl" style="left:284.4px;top:313.9px">SparkleShare</div>
<svg class="fold" style="left:398.1px;top:258.7px" width="53" height="52" viewBox="0 0 53 52">
 <path d="M2,50 V1.2 Q2,0 3.2,0 H21 L26.7,5.6 H48.7 Q49.9,5.6 49.9,6.8 V50 Z" fill="#c3af89"/>
 <path d="M0.2,48.7 V19.6 Q0.2,18.4 1.4,18.4 H15.8 L19.8,13.2 H51.3 Q52.5,13.2 52.5,14.4 V48.7 Q52.5,49.9 51.3,49.9 H1.4 Q0.2,49.9 0.2,48.7 Z" fill="url(#fg)"/><path d="M0.6,18.9 H15.9 L19.9,13.7 H52" fill="none" stroke="#efe2ca" stroke-width="0.9"/>
 <rect x="1" y="48.6" width="51" height="0.9" fill="#eedcbe"/><rect x="0.9" y="49.5" width="51" height="1" fill="#c6ae8c"/>
 <path d="M19.5,28 V22.3 H28.2 L32.5,26.6 V39.2 H29.9" fill="none" stroke="#c9b38f" stroke-width="1.8"/>
 <path d="M28.2,22.3 L32.5,26.6 H28.2 Z" fill="#c9b38f"/>
 <g fill="#c9b38f"><rect x="18.6" y="30.7" width="1.8" height="1.8"/><rect x="18.6" y="34.5" width="1.8" height="1.8"/><rect x="18.6" y="38.3" width="1.8" height="1.8"/><rect x="22.2" y="38.3" width="1.8" height="1.8"/><rect x="25.9" y="38.3" width="1.8" height="1.8"/></g>
</svg>
<div class="lbl" style="left:384.4px;top:313.9px">Templates</div>
<svg class="fold" style="left:497.9px;top:258.7px" width="53" height="52" viewBox="0 0 53 52">
 <path d="M2,50 V1.2 Q2,0 3.2,0 H21 L26.7,5.6 H48.7 Q49.9,5.6 49.9,6.8 V50 Z" fill="#c3af89"/>
 <path d="M0.2,48.7 V19.6 Q0.2,18.4 1.4,18.4 H15.8 L19.8,13.2 H51.3 Q52.5,13.2 52.5,14.4 V48.7 Q52.5,49.9 51.3,49.9 H1.4 Q0.2,49.9 0.2,48.7 Z" fill="url(#fg)"/><path d="M0.6,18.9 H15.9 L19.9,13.7 H52" fill="none" stroke="#efe2ca" stroke-width="0.9"/>
 <rect x="1" y="48.6" width="51" height="0.9" fill="#eedcbe"/><rect x="0.9" y="49.5" width="51" height="1" fill="#c6ae8c"/>
 <g fill="#c9b38f">
   <path d="M13.1,27.2 L18.2,31.7 L13.1,36.3 Z"/>
   <rect x="18.4" y="25.3" width="16.8" height="12.7" rx="1.4"/>
 </g>
</svg>
<div class="lbl" style="left:484.1px;top:313.9px">Videos</div>
</body></html>
